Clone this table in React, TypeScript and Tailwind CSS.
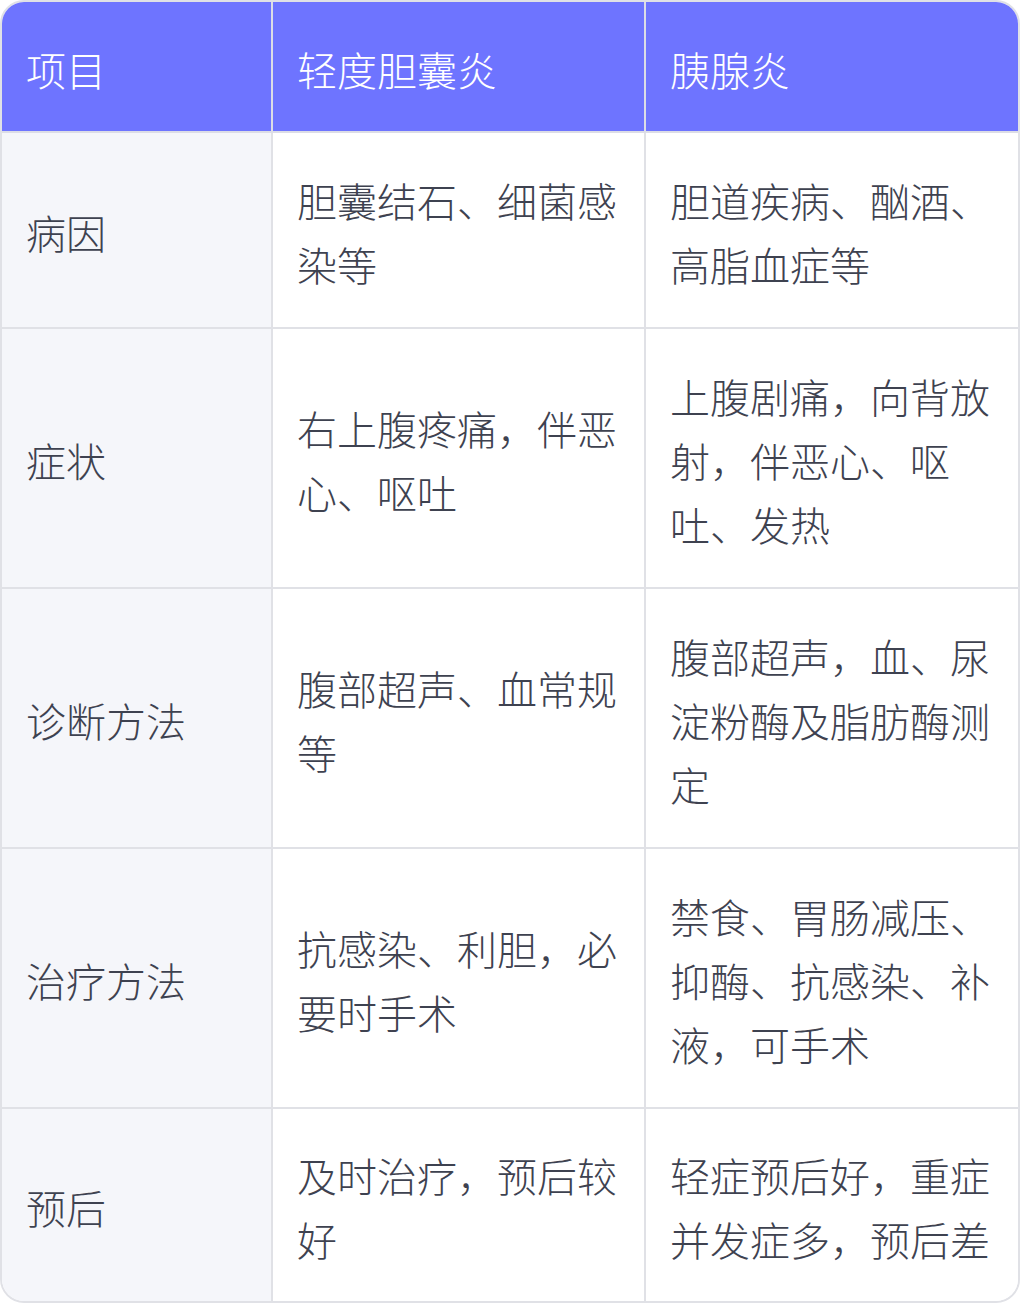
const headers = ['项目', '轻度胆囊炎', '胰腺炎'];

const rows = [
    ['病因', '胆囊结石、细菌感染等', '胆道疾病、酗酒、高脂血症等'],
    ['症状', '右上腹疼痛，伴恶心、呕吐', '上腹剧痛，向背放射，伴恶心、呕吐、发热'],
    ['诊断方法', '腹部超声、血常规等', '腹部超声，血、尿淀粉酶及脂肪酶测定'],
    ['治疗方法', '抗感染、利胆，必要时手术', '禁食、胃肠减压、抑酶、抗感染、补液，可手术'],
    ['预后', '及时治疗，预后较好', '轻症预后好，重症并发症多，预后差'],
];

export default function App() {
    return (
        <div className="w-[1020px] bg-white" style={{ fontFamily: '"Noto Sans CJK SC", "Noto Sans", sans-serif' }}>
            <div className="rounded-[24px] border-2 border-[#e0e1e6] overflow-hidden">
                <div className="grid grid-cols-[271px_373px_1fr] text-[40px] leading-[64px] font-light">
                    {/* Header */}
                    {headers.map((h, i) => (
                        <div
                            key={h}
                            className={`bg-[#6e74ff] text-white px-6 pt-[35px] pb-[30px] flex items-center border-b-2 border-[#dcdde6] ${i < 2 ? 'border-r-2' : ''}`}
                        >
                            {h}
                        </div>
                    ))}

                    {/* Body */}
                    {rows.map((row, r) => {
                        const last = r === rows.length - 1;
                        return row.map((cell, c) => (
                            <div
                                key={`${r}-${c}`}
                                className={`px-6 flex items-center text-[#3e4250] border-[#e0e1e6] ${last ? 'pt-[34px] pb-[30px]' : 'pt-[35px] pb-[31px] border-b-2'} ${c === 0 ? 'bg-[#f5f6fa]' : 'bg-white'} ${c < 2 ? 'border-r-2' : ''}`}
                            >
                                <span>{cell}</span>
                            </div>
                        ));
                    })}
                </div>
            </div>
        </div>
    );
}
